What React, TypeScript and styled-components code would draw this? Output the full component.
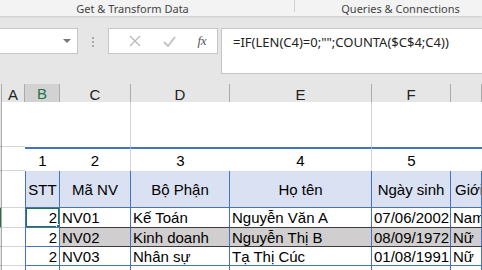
import React from 'react'
import styled, {createGlobalStyle} from 'styled-components'

const colors = {
    ribbon: '#f3f3f3',
    chrome: '#e6e6e6',
    boxBorder: '#c6c6c6',
    grid: '#d4d4d4',
    headLine: '#ababab',
    blue: '#4472c4',
    headFill: '#d9e1f2',
    green: '#217346',
    rowGray: '#d0cece',
    dark: '#3b3b3b'
};

const COLS = '2px 23px 35px 71px 99px 142px 79px 1fr';

const GlobalStyle = createGlobalStyle`
  html, body {
    margin: 0;
    padding: 0;
    width: 482px;
    height: 270px;
    overflow: hidden;
    background: #fff;
  }
`;

const Screen = styled.div`
  width: 482px;
  height: 270px;
  overflow: hidden;
  display: flex;
  flex-direction: column;
  font-family: "Liberation Sans", Arial, sans-serif;
`;

/* ribbon group labels */
const Ribbon = styled.div`
  height: 16px;
  flex: none;
  display: grid;
  grid-template-columns: 295px 1fr;
  background: ${colors.ribbon};
  box-shadow: 0 1px 2px rgba(0, 0, 0, 0.12);
  position: relative;
  z-index: 1;
`;
const GroupLabel = styled.div<{$last?: boolean}>`
  font-family: "Noto Sans", "Open Sans", sans-serif;
  font-size: 11px;
  color: #444;
  line-height: 14px;
  text-align: center;
  padding: ${p => (p.$last ? '2px 0 0 24px' : '2px 29px 0 0')};
  border-right: ${p => (p.$last ? 'none' : '1px solid #d2d2d2')};
  height: ${p => (p.$last ? '16px' : '12px')};
  box-sizing: border-box;
`;

/* formula bar */
const FormulaArea = styled.div`
  height: 68px;
  flex: none;
  background: ${colors.chrome};
  display: flex;
  align-items: flex-start;
  padding-top: 12px;
  box-sizing: border-box;
`;
const NameBox = styled.div`
  width: 80px;
  height: 26px;
  margin-left: -2px;
  box-sizing: border-box;
  background: #fff;
  border: 1px solid ${colors.boxBorder};
  display: flex;
  align-items: center;
  justify-content: flex-end;
  padding-right: 6px;
`;
const DropArrow = styled.span`
  width: 0;
  height: 0;
  border-left: 4px solid transparent;
  border-right: 4px solid transparent;
  border-top: 4px solid #777;
`;
const Grip = styled.div`
  width: 2px;
  margin: 9px 14px 0 14px;
  display: flex;
  flex-direction: column;
  gap: 2px;
  span {
    width: 2px;
    height: 2px;
    background: #aaa;
  }
`;
const ButtonBox = styled.div`
  width: 110px;
  height: 26px;
  box-sizing: border-box;
  background: #fff;
  border: 1px solid ${colors.boxBorder};
  display: flex;
  align-items: center;
  padding: 0 11px 0 20px;
  justify-content: space-between;
`;
const Fx = styled.span`
  font-family: "Liberation Serif", serif;
  font-style: italic;
  font-size: 13px;
  color: #555;
  letter-spacing: -0.5px;
`;
const FormulaInput = styled.div`
  margin-left: 3px;
  flex: 1;
  height: 46px;
  box-sizing: border-box;
  background: #fff;
  border: 1px solid ${colors.boxBorder};
  border-right: none;
  padding: 4px 0 0 11px;
  font-family: "Noto Sans", "Open Sans", sans-serif;
  font-size: 13px;
  color: #222;
  white-space: nowrap;
`;

/* sheet */
const Sheet = styled.div`
  flex: 1;
  display: flex;
  flex-direction: column;
  font-size: 15px;
  color: #000;
`;
const Row = styled.div<{$h: number}>`
  display: grid;
  grid-template-columns: ${COLS};
  height: ${p => p.$h}px;
  flex: none;
`;
const ColHead = styled.div<{$active?: boolean}>`
  background: ${p => (p.$active ? '#d2d2d2' : colors.chrome)};
  color: ${p => (p.$active ? colors.green : '#222')};
  border-right: 1px solid ${colors.headLine};
  border-bottom: ${p => (p.$active ? `2px solid ${colors.green}` : `1px solid ${colors.headLine}`)};
  box-sizing: border-box;
  display: flex;
  align-items: center;
  justify-content: center;
  padding-top: 1px;
`;
const RowHead = styled.div<{$active?: boolean}>`
  background: ${p => (p.$active ? colors.green : colors.chrome)};
  border-right: 1px solid ${colors.headLine};
  border-bottom: 1px solid ${colors.headLine};
  box-sizing: border-box;
`;

type Align = 'left' | 'center' | 'right';
const justify = {left: 'flex-start', center: 'center', right: 'flex-end'};

const Cell = styled.div<{
    $align?: Align;
    $fill?: string;
    $top?: string;
    $right?: string;
    $bottom?: string;
    $left?: string;
    $pad?: number;
}>`
  position: relative;
  box-sizing: border-box;
  background: ${p => p.$fill || '#fff'};
  border-top: ${p => (p.$top ? `1px solid ${p.$top}` : 'none')};
  border-right: ${p => (p.$right ? `1px solid ${p.$right}` : 'none')};
  border-bottom: ${p => (p.$bottom ? `1px solid ${p.$bottom}` : 'none')};
  border-left: ${p => (p.$left ? `1px solid ${p.$left}` : 'none')};
  display: flex;
  align-items: center;
  justify-content: ${p => justify[p.$align || 'left']};
  padding: 0 2px 0 ${p => p.$pad ?? 2}px;
  white-space: nowrap;
  overflow: hidden;
`;
const ActiveCell = styled.div`
  position: absolute;
  left: -1px;
  top: -1px;
  right: -1px;
  bottom: -1px;
  border: 2px solid ${colors.green};
  pointer-events: none;
`;
const FillHandle = styled.div`
  position: absolute;
  right: -4px;
  bottom: -4px;
  width: 5px;
  height: 5px;
  background: ${colors.green};
  border: 1px solid #fff;
  z-index: 2;
`;

const letters = ['A', 'B', 'C', 'D', 'E', 'F', ''];
const headers = ['STT', 'Mã NV', 'Bộ Phận', 'Họ tên', 'Ngày sinh', 'Giới tính'];
const people = [
    ['NV01', 'Kế Toán', 'Nguyễn Văn A', '07/06/2002', 'Nam'],
    ['NV02', 'Kinh doanh', 'Nguyễn Thị B', '08/09/1972', 'Nữ'],
    ['NV03', 'Nhân sự', 'Tạ Thị Cúc', '01/08/1991', 'Nữ']
];
const dataHeights = [20, 19, 19, 20];

const App: React.FC = () => {
    return (
        <Screen>
            <GlobalStyle />
            <Ribbon>
                <GroupLabel>Get &amp; Transform Data</GroupLabel>
                <GroupLabel $last>Queries &amp; Connections</GroupLabel>
            </Ribbon>
            <FormulaArea>
                <NameBox>
                    <DropArrow />
                </NameBox>
                <Grip>
                    <span />
                    <span />
                    <span />
                </Grip>
                <ButtonBox>
                    <svg width="12" height="12" viewBox="0 0 12 12">
                        <path d="M1 1 L11 11 M11 1 L1 11" stroke="#b9b9b9" strokeWidth="1.3" fill="none" />
                    </svg>
                    <svg width="13" height="11" viewBox="0 0 13 11">
                        <path d="M1 6 L5 10 L12 1" stroke="#c4c4c4" strokeWidth="2" fill="none" />
                    </svg>
                    <Fx>fx</Fx>
                </ButtonBox>
                <FormulaInput>=IF(LEN(C4)=0;"";COUNTA($C$4;C4))</FormulaInput>
            </FormulaArea>
            <Sheet>
                <Row $h={18}>
                    <ColHead />
                    {letters.map((l, i) => (
                        <ColHead key={i} $active={l === 'B'}>{l}</ColHead>
                    ))}
                </Row>
                <Row $h={45}>
                    <RowHead />
                    <Cell $bottom={colors.grid} />
                    <Cell />
                    <Cell $right={colors.grid} />
                    <Cell />
                    <Cell $right={colors.grid} />
                    <Cell />
                    <Cell />
                </Row>
                <Row $h={24}>
                    <RowHead />
                    <Cell $bottom={colors.grid} />
                    {[1, 2, 3, 4, 5, ''].map((n, i) => (
                        <Cell
                            key={i}
                            $align="center"
                            $top={colors.blue}
                            $right={i === 1 || i === 3 ? colors.grid : undefined}
                            style={{borderTopWidth: 2}}
                        >
                            {n}
                        </Cell>
                    ))}
                </Row>
                <Row $h={37}>
                    <RowHead />
                    <Cell $bottom={colors.grid} />
                    {headers.map((h, i) => (
                        <Cell
                            key={h}
                            $align={i === headers.length - 1 ? 'left' : 'center'}
                            $pad={i === headers.length - 1 ? 4 : 2}
                            $fill={colors.headFill}
                            $left={i === 0 ? colors.blue : undefined}
                            $right={colors.blue}
                            $bottom={colors.blue}
                        >
                            {h}
                        </Cell>
                    ))}
                </Row>
                {dataHeights.map((h, r) => {
                    const person = people[r];
                    const shaded = r === 1;
                    return (
                        <Row key={r} $h={h}>
                            <RowHead $active={r === 0} />
                            <Cell $bottom={colors.grid} />
                            <Cell
                                $align="right"
                                $left={colors.blue}
                                $right={colors.blue}
                                $bottom={colors.blue}
                            >
                                {person ? 2 : ''}
                                {r === 0 && (
                                    <>
                                        <ActiveCell />
                                        <FillHandle />
                                    </>
                                )}
                            </Cell>
                            {[0, 1, 2, 3, 4].map(c => (
                                <Cell
                                    key={c}
                                    $fill={shaded ? colors.rowGray : '#fff'}
                                    $right={colors.blue}
                                    $bottom={shaded || r === 0 ? colors.dark : colors.blue}
                                >
                                    {person ? person[c] : ''}
                                </Cell>
                            ))}
                        </Row>
                    );
                })}
            </Sheet>
        </Screen>
    );
};

export default App
